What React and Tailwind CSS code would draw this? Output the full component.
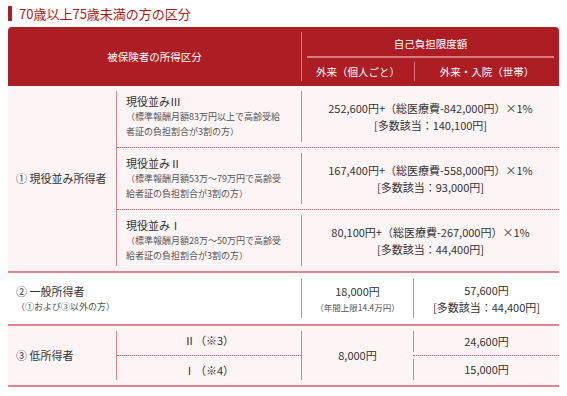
export default function App() {
  const font = { fontFamily: '"Noto Sans CJK JP", "Noto Sans", sans-serif' };
  const dotted = "border-b border-dotted border-[#e0606e]";
  const vline = "border-[#d9838e]";
  const rowLine = "border-b-2 border-[#e0848f]";

  const SubRow = ({ title, lines, amount, sub, last }) => (
    <div className={`flex ${last ? "" : dotted}`}>
      <div className="w-[184px] pl-[9px] pt-[7px] pb-[8px]">
        <div className="text-[11px] leading-[16px] text-[#333]">{title}</div>
        <div className="text-[9px] leading-[15px] text-[#555] pl-[0px]">
          {lines.map((l, i) => (
            <div key={i}>{l}</div>
          ))}
        </div>
      </div>
      <div className="flex-1 py-[5px] flex">
        <div className={`flex-1 border-l ${vline} flex flex-col items-center justify-center text-[11px] leading-[17px] text-[#333]`}>
          <div>{amount}</div>
          <div>{sub}</div>
        </div>
      </div>
    </div>
  );

  return (
    <div className="w-[567px] h-[396px] bg-white" style={font}>
      <div className="flex items-center h-[27px] pl-[8px] pt-[0px]">
        <div className="w-[4px] h-[15px] bg-[#b01e24]" />
        <div className="ml-[7px] text-[13px] text-[#a61a20] leading-[18px]">70歳以上75歳未満の方の区分</div>
      </div>
      <div className="ml-[8px] w-[551px]">
        {/* header */}
        <div className="flex h-[59px] bg-[#ad1e24] rounded-t-[4px] text-white text-[10.5px]">
          <div className="w-[293px] flex items-center justify-center">被保険者の所得区分</div>
          <div className="flex-1 py-[5px] flex">
            <div className="flex-1 border-l border-[#d97a80] flex flex-col">
              <div className="h-[24px] flex items-center justify-center">自己負担限度額</div>
              <div className="mx-[5px] border-t-2 border-[#d97a80]" />
              <div className="flex-1 flex pt-[4px]">
                <div className="w-[112px] flex items-center justify-center">外来（個人ごと）</div>
                <div className="flex-1 border-l border-[#d97a80] flex items-center justify-center">外来・入院（世帯）</div>
              </div>
            </div>
          </div>
        </div>

        {/* row 1 */}
        <div className={`flex bg-[#fdf4f6] ${rowLine}`}>
          <div className="w-[109px] py-[5px] flex">
            <div className={`flex-1 border-r ${vline} flex items-center pl-[8px] text-[11px] text-[#333]`}>
              ① 現役並み所得者
            </div>
          </div>
          <div className="flex-1 flex flex-col">
            <SubRow
              title="現役並みⅢ"
              lines={["（標準報酬月額83万円以上で高齢受給", "者証の負担割合が3割の方）"]}
              amount="252,600円+（総医療費-842,000円）×1%"
              sub="[多数該当：140,100円]"
            />
            <SubRow
              title="現役並みⅡ"
              lines={["（標準報酬月額53万～79万円で高齢受", "給者証の負担割合が3割の方）"]}
              amount="167,400円+（総医療費-558,000円）×1%"
              sub="[多数該当：93,000円]"
            />
            <SubRow
              title="現役並みⅠ"
              lines={["（標準報酬月額28万～50万円で高齢受", "給者証の負担割合が3割の方）"]}
              amount="80,100円+（総医療費-267,000円）×1%"
              sub="[多数該当：44,400円]"
              last
            />
          </div>
        </div>

        {/* row 2 */}
        <div className={`flex bg-white ${rowLine} h-[53px]`}>
          <div className="w-[293px] flex flex-col justify-center pl-[8px]">
            <div className="text-[11px] leading-[17px] text-[#333]">② 一般所得者</div>
            <div className="text-[9px] leading-[14px] text-[#555]">（①および③以外の方）</div>
          </div>
          <div className="w-[112px] py-[6px] flex">
            <div className={`flex-1 border-l ${vline} flex flex-col items-center justify-center`}>
              <div className="text-[11px] leading-[17px] text-[#333]">18,000円</div>
              <div className="text-[8.5px] leading-[14px] text-[#555]">（年間上限14.4万円）</div>
            </div>
          </div>
          <div className="flex-1 py-[6px] flex">
            <div className={`flex-1 border-l ${vline} flex flex-col items-center justify-center text-[11px] leading-[17px] text-[#333]`}>
              <div>57,600円</div>
              <div>[多数該当：44,400円]</div>
            </div>
          </div>
        </div>

        {/* row 3 */}
        <div className={`flex bg-[#fdf4f6] ${rowLine} h-[61px]`}>
          <div className="w-[109px] py-[5px] flex">
            <div className={`flex-1 border-r ${vline} flex items-center pl-[8px] text-[11px] text-[#333]`}>
              ③ 低所得者
            </div>
          </div>
          <div className="w-[184px] flex flex-col text-[11px] text-[#333]">
            <div className={`flex-1 flex items-center justify-center ${dotted}`}>Ⅱ（※3）</div>
            <div className="flex-1 flex items-center justify-center">Ⅰ（※4）</div>
          </div>
          <div className="w-[112px] py-[5px] flex">
            <div className={`flex-1 border-l ${vline} flex items-center justify-center text-[11px] text-[#333]`}>
              8,000円
            </div>
          </div>
          <div className="flex-1 flex flex-col">
            <div className={`flex-1 flex items-stretch ${dotted}`}>
              <div className="flex-1 pt-[5px] pb-[3px] flex">
                <div className={`flex-1 border-l ${vline} flex items-center justify-center text-[11px] text-[#333]`}>24,600円</div>
              </div>
            </div>
            <div className="flex-1 flex">
              <div className="flex-1 pt-[3px] pb-[5px] flex">
                <div className={`flex-1 border-l ${vline} flex items-center justify-center text-[11px] text-[#333]`}>15,000円</div>
              </div>
            </div>
          </div>
        </div>
      </div>
    </div>
  );
}
